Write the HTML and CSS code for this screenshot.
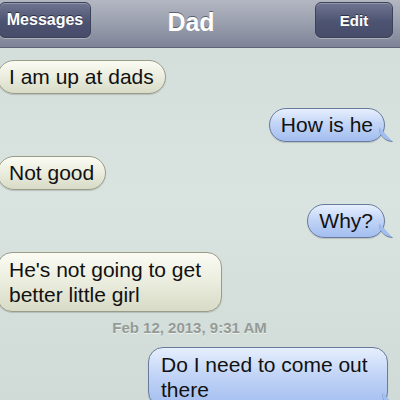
FILE: index.html
```html
<!DOCTYPE html>
<html lang="en">
<head>
    <meta charset="UTF-8">
    <meta name="viewport" content="width=device-width, initial-scale=1.0">
    <title>Dad</title>
    <link rel="stylesheet" href="styles.css">
</head>
<body>
    <div class="navbar">
        <button class="nav-btn back">Messages</button>
        <div class="nav-title">Dad</div>
        <button class="nav-btn edit">Edit</button>
    </div>
    <div class="thread">
        <div class="bubble received">I am up at dads</div>
        <div class="bubble sent">How is he</div>
        <div class="bubble received">Not good</div>
        <div class="bubble sent">Why?</div>
        <div class="bubble received wide">He's not going to get better little girl</div>
        <div class="timestamp">Feb 12, 2013, 9:31 AM</div>
        <div class="bubble sent wide">Do I need to come out there</div>
    </div>
</body>
</html>
```

FILE: styles.css
```css
body {
    margin: 0;
    width: 400px;
    height: 400px;
    overflow: hidden;
    font-family: 'Liberation Sans', Arial, sans-serif;
    background: linear-gradient(to bottom, #d2dcd8, #d9e3df 50%, #d0dad6);
}
.navbar {
    height: 48px;
    display: flex;
    align-items: flex-start;
    justify-content: space-between;
    padding: 2px 7px 0 0;
    box-sizing: border-box;
    background: linear-gradient(to bottom, #b3b7c2, #9a9fae 50%, #7d8396);
    border-bottom: 1px solid #5e6474;
}
.nav-btn {
    height: 36px;
    border: 1px solid #3d4357;
    border-radius: 6px;
    background: linear-gradient(to bottom, #6f7590, #4d5472 55%, #464c69);
    color: #fff;
    font-family: inherit;
    font-weight: bold;
    font-size: 15px;
    text-shadow: 0 -1px 0 #2c3044;
    box-shadow: inset 0 1px 0 rgba(255, 255, 255, 0.25), 0 1px 0 rgba(255, 255, 255, 0.3);
    padding: 0;
}
.back {
    width: 92px;
    margin-left: -1px;
    font-size: 16px;
}
.edit {
    width: 78px;
}
.nav-title {
    color: #fff;
    font-weight: bold;
    font-size: 25px;
    line-height: 40px;
    margin-left: -24px;
    text-shadow: 0 -1px 0 #5a6070;
}
.thread {
    display: flex;
    flex-direction: column;
    gap: 14px;
    padding: 12px 15px 0 0;
}
.bubble {
    position: relative;
    font-size: 21px;
    line-height: 24px;
    color: #111;
    padding: 4px 11px;
    border-radius: 17px;
}
.received {
    align-self: flex-start;
    margin-left: -3px;
    background: linear-gradient(to bottom, #fbfbf3, #eceee0 45%, #d8dbc6);
    border: 1px solid #9a9c8a;
    box-shadow: 0 1px 1px rgba(0, 0, 0, 0.15);
}
.sent {
    align-self: flex-end;
    background: linear-gradient(to bottom, #e6effd, #c3d5f7 45%, #a2bdef);
    border: 1px solid #687b9c;
    box-shadow: 0 1px 1px rgba(0, 0, 0, 0.15);
}
.sent::after {
    content: "";
    position: absolute;
    right: -9px;
    bottom: -1px;
    width: 14px;
    height: 14px;
    background: #a2bdef;
    border-bottom: 1px solid #687b9c;
    border-radius: 0 0 0 14px;
    clip-path: polygon(0 0, 100% 100%, 0 100%);
}
.wide {
    line-height: 25px;
    border-radius: 15px;
}
.received.wide {
    max-width: 198px;
    padding-right: 14px;
}
.sent.wide {
    width: 212px;
    margin-right: -3px;
    padding-left: 12px;
    padding-right: 14px;
}
.timestamp {
    align-self: center;
    margin: -7px 0 -3px -6px;
    font-size: 15px;
    font-weight: bold;
    color: #949b97;
    text-shadow: 0 1px 0 rgba(255, 255, 255, 0.6);
}
```
